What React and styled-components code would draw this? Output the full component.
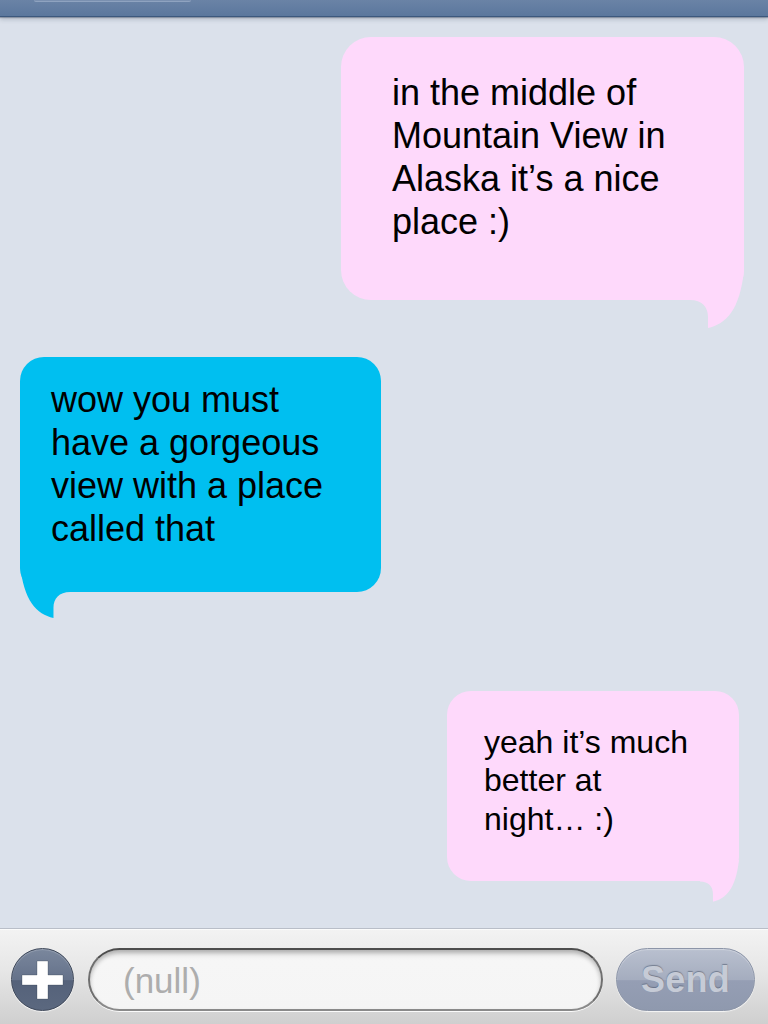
import React from "react";
import styled, { createGlobalStyle } from "styled-components";

const GlobalStyle = createGlobalStyle`
  html, body {
    margin: 0;
    padding: 0;
    background: #dbe1eb;
    font-family: "Liberation Sans", Arial, Helvetica, sans-serif;
  }
  * { box-sizing: border-box; }
`;

const Screen = styled.div`
  width: 768px;
  height: 1024px;
  display: flex;
  flex-direction: column;
  overflow: hidden;
  background: #dbe1eb;
`;

const NavBar = styled.div`
  position: relative;
  z-index: 2;
  height: 17px;
  flex: none;
  display: flex;
  align-items: flex-start;
  padding-left: 34px;
  background: linear-gradient(#6a83a6, #5b779d);
  border-bottom: 1px solid #3c587d;
  box-shadow: 0 1px 1px rgba(40, 55, 80, 0.35), 0 3px 4px rgba(60, 70, 90, 0.2);
`;

const NavButtonEdge = styled.div`
  width: 157px;
  height: 2px;
  border-radius: 0 0 6px 6px;
  background: #7a90b0;
  border-bottom: 1px solid #8fa3c0;
`;

const Messages = styled.div`
  flex: 1;
  display: flex;
  flex-direction: column;
  padding: 20px 24px 0 20px;
`;

const Bubble = styled.div`
  position: relative;
  align-self: ${(p) => (p.$side === "right" ? "flex-end" : "flex-start")};
  width: ${(p) => p.$width}px;
  margin-top: ${(p) => p.$top || 0}px;
  margin-right: ${(p) => p.$right || 0}px;
  padding: ${(p) => p.$pad};
  border-radius: ${(p) => p.$radius}px;
  background: ${(p) => p.$color};
  color: #000;
  font-size: ${(p) => p.$size}px;
  line-height: ${(p) => p.$lh}px;
  white-space: nowrap;
`;

const TailSvg = styled.svg`
  position: absolute;
  bottom: ${(p) => -p.$depth}px;
  ${(p) => (p.$side === "right" ? "right: 0;" : "left: 0; transform: scaleX(-1);")}
  overflow: visible;
`;

function Tail({ side, color, scale }) {
  const w = 54 * scale;
  const h = 58 * scale;
  return (
    <TailSvg
      $side={side}
      $depth={28 * scale}
      width={w}
      height={h}
      viewBox="0 0 54 58"
      preserveAspectRatio="none"
    >
      <path
        d="M0 30 C12 30 18 37 18 47 L18 58 C36 54 50 40 54 0 L0 0 Z"
        fill={color}
      />
    </TailSvg>
  );
}

const InputBar = styled.div`
  height: 96px;
  flex: none;
  display: flex;
  align-items: flex-start;
  padding: 19px 13px 0 11px;
  gap: 14px;
  background: linear-gradient(#f3f3f3 0%, #e6e6e6 45%, #cfcfcf 100%);
  border-top: 1px solid #b9bec8;
  box-shadow: inset 0 1px 0 #fbfbfb;
`;

const PlusButton = styled.div`
  width: 63px;
  height: 63px;
  flex: none;
  border-radius: 50%;
  display: flex;
  align-items: center;
  justify-content: center;
  background: linear-gradient(#7a879d 0%, #65728a 50%, #55627a 52%, #5b687f 100%);
  border: 1px solid #3e485a;
  box-shadow: 0 1px 1px rgba(255, 255, 255, 0.8), inset 0 1px 1px rgba(255, 255, 255, 0.25);
`;

const Field = styled.div`
  width: 515px;
  height: 63px;
  flex: none;
  border-radius: 32px;
  display: flex;
  align-items: center;
  padding-left: 33px;
  background: linear-gradient(#e9e9e9 0%, #f6f6f6 18%, #f5f5f5 100%);
  border: 2px solid #6f6f6f;
  border-top-color: #4d4d4d;
  border-bottom-color: #8a8a8a;
  box-shadow: inset 0 3px 4px rgba(0, 0, 0, 0.25), 0 1px 0 rgba(255, 255, 255, 0.9);
  margin-right: -1px;
`;

const Placeholder = styled.span`
  font-size: 35px;
  color: #adadad;
  line-height: 1;
  margin-top: 1px;
`;

const SendButton = styled.div`
  width: 139px;
  height: 63px;
  flex: none;
  border-radius: 32px;
  display: flex;
  align-items: center;
  justify-content: center;
  background: linear-gradient(#b9c0cf 0%, #a5adbf 50%, #959eb4 52%, #8f99ae 100%);
  border: 1px solid #8c95a8;
  box-shadow: 0 1px 1px rgba(255, 255, 255, 0.8), inset 0 1px 1px rgba(255, 255, 255, 0.35);
  font-size: 36px;
  font-weight: bold;
  color: #c6cbd6;
  text-shadow: 0 -1px 1px rgba(70, 80, 100, 0.55);
  letter-spacing: 0.3px;
`;

const messages = [
  {
    side: "right",
    color: "#fed9fb",
    width: 403,
    top: 0,
    right: 0,
    pad: "34px 0 57px 51px",
    radius: 30,
    size: 36,
    lh: 43,
    scale: 1,
    lines: ["in the middle of", "Mountain View in", "Alaska it\u2019s a nice", "place :)"],
  },
  {
    side: "left",
    color: "#00bff0",
    width: 361,
    top: 57,
    right: 0,
    pad: "21px 0 42px 31px",
    radius: 24,
    size: 36,
    lh: 43,
    scale: 0.93,
    lines: ["wow you must", "have a gorgeous", "view with a place", "called that"],
  },
  {
    side: "right",
    color: "#fed9fb",
    width: 292,
    top: 99,
    right: 5,
    pad: "32px 0 43px 37px",
    radius: 24,
    size: 32,
    lh: 38.4,
    scale: 0.72,
    lines: ["yeah it\u2019s much", "better at", "night\u2026 :)"],
  },
];

export default function App() {
  return (
    <Screen>
      <GlobalStyle />
      <NavBar>
        <NavButtonEdge />
      </NavBar>
      <Messages>
        {messages.map((m, i) => (
          <Bubble
            key={i}
            $side={m.side}
            $color={m.color}
            $width={m.width}
            $top={m.top}
            $right={m.right}
            $pad={m.pad}
            $radius={m.radius}
            $size={m.size}
            $lh={m.lh}
          >
            {m.lines.map((l, j) => (
              <div key={j}>{l}</div>
            ))}
            <Tail side={m.side} color={m.color} scale={m.scale} />
          </Bubble>
        ))}
      </Messages>
      <InputBar>
        <PlusButton>
          <svg width="44" height="42" viewBox="0 0 44 42">
            <g fill="#ffffff" stroke="rgba(40,50,70,0.35)" strokeWidth="0.8">
              <path d="M16 2 H27 V16 H42 V26 H27 V40 H16 V26 H1 V16 H16 Z" />
            </g>
          </svg>
        </PlusButton>
        <Field>
          <Placeholder>(null)</Placeholder>
        </Field>
        <SendButton>Send</SendButton>
      </InputBar>
    </Screen>
  );
}
